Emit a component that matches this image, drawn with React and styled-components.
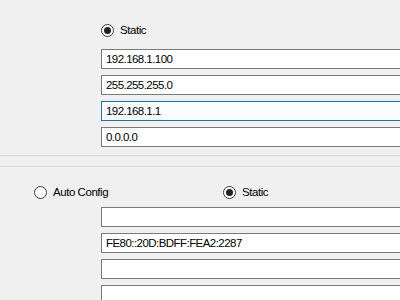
import React from 'react'
import styled, { createGlobalStyle } from 'styled-components'

const GlobalStyle = createGlobalStyle`
    html, body {
        margin: 0;
        padding: 0;
        background: #f0f0f0;
        overflow: hidden;
    }
    body {
        font-family: "Liberation Sans", Arial, sans-serif;
        font-size: 11.5px;
        color: #000;
    }
`

const Page = styled.div`
    width: 400px;
    height: 300px;
    overflow: hidden;
    background: #f0f0f0;
`

const Section = styled.div`
    display: flex;
    flex-direction: column;
    padding: ${p => p.$pad};
    border-top: ${p => p.$top ? '1px solid #dadada' : 'none'};
    border-bottom: ${p => p.$bottom ? '1px solid #dadada' : 'none'};
`

const Spacer = styled.div`
    height: 10px;
`

const RadioRow = styled.div`
    display: flex;
    align-items: center;
    height: 20px;
    padding-left: ${p => p.$indent}px;
`

const RadioOption = styled.label`
    display: flex;
    align-items: center;
    gap: 6px;
    width: ${p => p.$width ? p.$width + 'px' : 'auto'};
    letter-spacing: -0.45px;
`

const RadioCircle = styled.span`
    box-sizing: border-box;
    width: 13px;
    height: 13px;
    border-radius: 50%;
    border: 1px solid #3a3a3a;
    background: #fff;
    display: flex;
    align-items: center;
    justify-content: center;

    &::after {
        content: '';
        width: 7px;
        height: 7px;
        border-radius: 50%;
        background: ${p => p.$checked ? '#222' : 'transparent'};
    }
`

const Fields = styled.div`
    display: flex;
    flex-direction: column;
    gap: 6px;
    padding-left: 101px;
    margin-top: ${p => p.$gap}px;
`

const Field = styled.div`
    box-sizing: border-box;
    width: 320px;
    height: 20px;
    border: 1px solid ${p => p.$focused ? '#2a6f9f' : '#7a7a7a'};
    background: ${p => p.$focused ? '#f8fcfe' : '#fff'};
    box-shadow: ${p => p.$focused ? '0 -1px 0 #d6f0fb, 0 1px 0 #e4f1f8' : 'none'};
    padding: 0 4px;
    display: flex;
    align-items: center;
    letter-spacing: -0.55px;
    white-space: nowrap;
`

const Radio = ({ checked, label, width }) => (
    <RadioOption $width={width}>
        <RadioCircle $checked={checked} />
        {label}
    </RadioOption>
)

export default function App() {
    const ipv4 = [
        { value: '192.168.1.100' },
        { value: '255.255.255.0' },
        { value: '192.168.1.1', focused: true },
        { value: '0.0.0.0' },
    ]
    const ipv6 = ['', 'FE80::20D:BDFF:FEA2:2287', '', '']

    return (
        <Page>
            <GlobalStyle />
            <Section $pad="20px 0 8px 0" $bottom>
                <RadioRow $indent={101}>
                    <Radio checked label="Static" />
                </RadioRow>
                <Fields $gap={9}>
                    {ipv4.map((f, i) => (
                        <Field key={i} $focused={f.focused}>{f.value}</Field>
                    ))}
                </Fields>
            </Section>
            <Spacer />
            <Section $pad="15px 0 0 0" $top>
                <RadioRow $indent={34}>
                    <Radio label="Auto Config" width={189} />
                    <Radio checked label="Static" />
                </RadioRow>
                <Fields $gap={5}>
                    {ipv6.map((v, i) => (
                        <Field key={i}>{v}</Field>
                    ))}
                </Fields>
            </Section>
        </Page>
    )
}
